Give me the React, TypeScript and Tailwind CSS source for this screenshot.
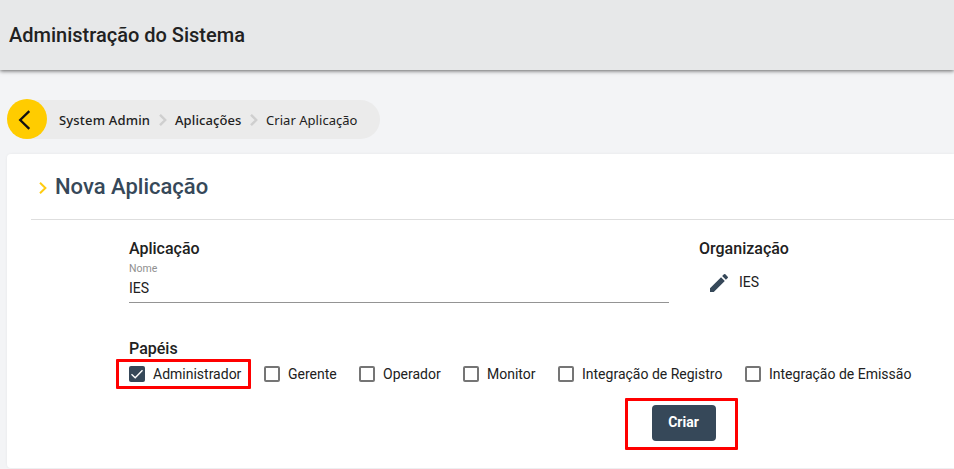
import React from "react";

const roles = [
  { label: "Gerente", width: "w-[95px]" },
  { label: "Operador", width: "w-[104px]" },
  { label: "Monitor", width: "w-[95px]" },
  { label: "Integração de Registro", width: "w-[187px]" },
  { label: "Integração de Emissão", width: "w-[180px]" },
];

function Separator() {
  return (
    <svg className="h-3 w-2 shrink-0" viewBox="0 0 8 12" fill="none" stroke="#cfcfcf" strokeWidth="2.4">
      <path d="M1 0.8L6.2 6L1 11.2" />
    </svg>
  );
}

function Checkbox({ checked = false }: { checked?: boolean }) {
  return checked ? (
    <span className="flex h-4 w-4 shrink-0 items-center justify-center rounded-[2px] bg-[#364859]">
      <svg className="h-4 w-4" viewBox="0 0 16 16" fill="none" stroke="#fff" strokeWidth="1.4">
        <path d="M2.5 8.3L6.2 11.7L13.5 4.3" />
      </svg>
    </span>
  ) : (
    <span className="h-4 w-4 shrink-0 rounded-[2px] border-2 border-[#757575]" />
  );
}

export default function App() {
  return (
    <div className="flex h-[469px] w-[954px] flex-col overflow-hidden bg-[#f3f4f6] font-['Roboto',sans-serif] text-[#212121]">
      <header className="z-10 flex h-[70px] shrink-0 items-center bg-[#e7e8e9] pl-[9px] shadow-[0_1px_4px_rgba(0,0,0,0.6)]">
        <h1 className="text-[20px] leading-6 font-medium">Administração do Sistema</h1>
      </header>

      <nav className="mt-[29px] ml-[7px] flex h-10 w-[373px] shrink-0 items-end">
        <button className="z-10 flex h-10 w-10 shrink-0 items-center justify-center rounded-full bg-[#ffcc00]">
          <svg className="h-10 w-10" viewBox="0 0 40 40" fill="none" stroke="#111" strokeWidth="2.3">
            <path d="M22.3 12.2L13.2 21L22.3 29.8" />
          </svg>
        </button>
        <div className="-ml-5 flex h-[39px] flex-1 items-center rounded-r-full bg-[#ebebeb] pl-8 font-['Noto_Sans',sans-serif] text-[13px] leading-5 whitespace-nowrap">
          <span className="w-[100px] font-medium tracking-[0.18px]">System Admin</span>
          <Separator />
          <span className="ml-2 w-[75px] font-medium tracking-[0.1px]">Aplicações</span>
          <Separator />
          <span className="ml-2 tracking-[0.04px]">Criar Aplicação</span>
        </div>
      </nav>

      <main className="mt-[15px] ml-[7px] h-[314px] shrink-0 rounded-l-[4px] bg-white shadow-[0_0_3px_rgba(0,0,0,0.06)]">
        <div className="ml-6 flex h-[66px] items-center border-b border-[#dedede] pl-2">
          <svg className="mt-0.5 h-3 w-2 shrink-0" viewBox="0 0 8 12" fill="none" stroke="#fc1" strokeWidth="2">
            <path d="M1 0.8L6.4 6L1 11.2" />
          </svg>
          <h2 className="ml-2 text-[22px] leading-7 font-medium text-[#364859]">Nova Aplicação</h2>
        </div>

        <div className="ml-[122px] flex h-[83px] pt-[19px]">
          <section className="w-[540px]">
            <h3 className="text-[16px] leading-5 font-medium">Aplicação</h3>
            <div className="border-b border-[#949494] pt-px pb-1">
              <label className="block h-[18px] text-[10.5px] leading-[18px] text-[#909090]">Nome</label>
              <div className="text-[14px] leading-5">IES</div>
            </div>
          </section>
          <section className="ml-[30px]">
            <h3 className="text-[16px] leading-5 font-medium">Organização</h3>
            <div className="mt-[11px] ml-2 flex h-6 items-center">
              <svg className="mt-0.5 h-6 w-6" viewBox="0 0 24 24" fill="#364859">
                <path d="M3 17.25V21h3.75L17.81 9.94l-3.75-3.75zM20.71 7.04a1 1 0 0 0 0-1.41l-2.34-2.34a1 1 0 0 0-1.41 0l-1.83 1.83 3.75 3.75z" />
              </svg>
              <span className="ml-2 text-[14px]">IES</span>
            </div>
          </section>
        </div>

        <section className="pt-[36px]">
          <h3 className="ml-[122px] text-[16px] leading-5 font-medium">Papéis</h3>
          <div className="ml-[109px] flex h-[30px] items-center text-[14px] leading-5 whitespace-nowrap">
            <label className="flex h-[30px] w-[135px] items-center gap-2 rounded-[1px] border-[3px] border-[#ff0000] pl-[10px]">
              <Checkbox checked />
              Administrador
            </label>
            <div className="ml-[13px] flex items-center">
              {roles.map((role) => (
                <label key={role.label} className={`flex items-center gap-2 ${role.width}`}>
                  <Checkbox />
                  {role.label}
                </label>
              ))}
            </div>
          </div>
          <div className="mt-[9px] ml-[618px] flex h-[52px] w-[113px] items-start justify-center rounded-[1px] border-[3px] border-[#ff0000] pt-1">
            <button className="ml-1 h-9 w-16 rounded-[4px] bg-[#364859] pb-0.5 text-[14px] font-bold text-white">Criar</button>
          </div>
        </section>
      </main>
    </div>
  );
}
